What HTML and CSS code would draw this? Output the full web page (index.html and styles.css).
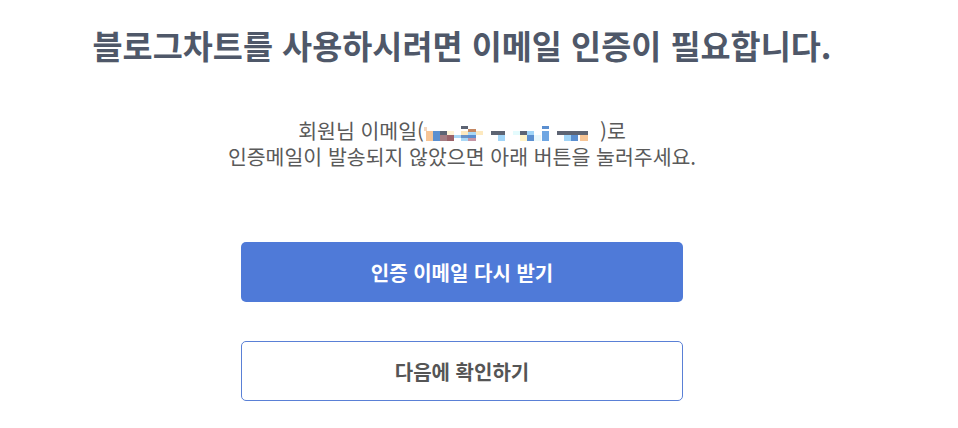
FILE: index.html
```html
<!DOCTYPE html>
<html lang="ko">
<head>
<meta charset="utf-8">
<title>이메일 인증</title>
<link rel="stylesheet" href="styles.css">
</head>
<body>
<main class="page">
  <h1 class="title">블로그차트를 사용하시려면 이메일 인증이 필요합니다.</h1>
  <p class="desc">회원님 이메일(<svg class="masked" width="176" height="16" viewBox="0 0 176 16" aria-hidden="true">
      <rect x="0" y="1" width="3" height="4" fill="#f3d7c0"/>
      <rect x="2" y="5" width="7" height="10" fill="#f7c596"/>
      <rect x="9" y="5" width="7" height="10" fill="#5b8fd0"/>
      <rect x="16" y="5" width="7" height="4" fill="#5d6473"/>
      <rect x="16" y="9" width="7" height="6" fill="#a47c82"/>
      <rect x="23" y="5" width="7" height="4" fill="#fff4d6"/>
      <rect x="23" y="9" width="7" height="6" fill="#9b6268"/>
      <rect x="30" y="9" width="7" height="3" fill="#a9d8f6"/>
      <rect x="37" y="0" width="7" height="3" fill="#5d6473"/>
      <rect x="37" y="5" width="7" height="4" fill="#fde9bf"/>
      <rect x="37" y="9" width="7" height="3" fill="#6a93c8"/>
      <rect x="37" y="12" width="7" height="3" fill="#a9d8f6"/>
      <rect x="44" y="3" width="8" height="3" fill="#c48762"/>
      <rect x="44" y="6" width="8" height="3" fill="#a9d8f6"/>
      <rect x="44" y="9" width="8" height="3" fill="#5b8fd0"/>
      <rect x="44" y="12" width="8" height="3" fill="#c596a6"/>
      <rect x="52" y="5" width="7" height="4" fill="#fde9bf"/>
      <rect x="67" y="5" width="14" height="4" fill="#5d6473"/>
      <rect x="74" y="9" width="7" height="6" fill="#a1d5f8"/>
      <rect x="89" y="5" width="7" height="4" fill="#e4fbfd"/>
      <rect x="96" y="9" width="7" height="6" fill="#fff3c7"/>
      <rect x="96" y="5" width="8" height="4" fill="#5d6473"/>
      <rect x="103" y="5" width="7" height="4" fill="#a1d5f8"/>
      <rect x="103" y="9" width="7" height="6" fill="#5b8fd0"/>
      <rect x="110" y="9" width="7" height="6" fill="#eaf8fc"/>
      <rect x="118" y="0" width="7" height="3" fill="#5b8fd0"/>
      <rect x="118" y="5" width="7" height="10" fill="#6fa6e2"/>
      <rect x="133" y="5" width="7" height="4" fill="#5d6473"/>
      <rect x="140" y="5" width="10" height="4" fill="#5d6473"/>
      <rect x="140" y="9" width="7" height="6" fill="#a1d5f8"/>
      <rect x="147" y="9" width="7" height="6" fill="#5b8fd0"/>
      <rect x="150" y="5" width="14" height="4" fill="#5d6473"/>
      <rect x="156" y="9" width="8" height="6" fill="#f7c596"/>
    </svg>)로<br>인증메일이 발송되지 않았으면 아래 버튼을 눌러주세요.</p>
  <div class="actions">
    <button class="btn btn-primary" type="button">인증 이메일 다시 받기</button>
    <button class="btn btn-outline" type="button">다음에 확인하기</button>
  </div>
</main>
</body>
</html>
```

FILE: styles.css
```css
html, body {
  margin: 0;
  padding: 0;
  background: #ffffff;
}

body {
  font-family: "Noto Sans CJK KR", "Noto Sans", "Liberation Sans", sans-serif;
}

.page {
  width: 924px;
  padding-top: 25px;
  display: flex;
  flex-direction: column;
  align-items: center;
  text-align: center;
}

.title {
  margin: 0;
  font-size: 32.7px;
  line-height: 40px;
  font-weight: 700;
  color: #4f5869;
  white-space: nowrap;
}

.desc {
  margin: 52px 0 0;
  font-size: 20.5px;
  line-height: 26px;
  color: #5a5a5a;
  white-space: nowrap;
}

.masked {
  display: inline-block;
  vertical-align: -3px;
}

.actions {
  margin-top: 73px;
  display: flex;
  flex-direction: column;
  gap: 39px;
}

.btn {
  width: 442px;
  height: 60px;
  border-radius: 5px;
  font-family: inherit;
  font-weight: 700;
  font-size: 20px;
  cursor: pointer;
  padding: 0;
}

.btn-primary {
  background: #4f7ad8;
  border: none;
  color: #ffffff;
}

.btn-outline {
  background: #ffffff;
  border: 1px solid #5a80d6;
  color: #555555;
}
```
